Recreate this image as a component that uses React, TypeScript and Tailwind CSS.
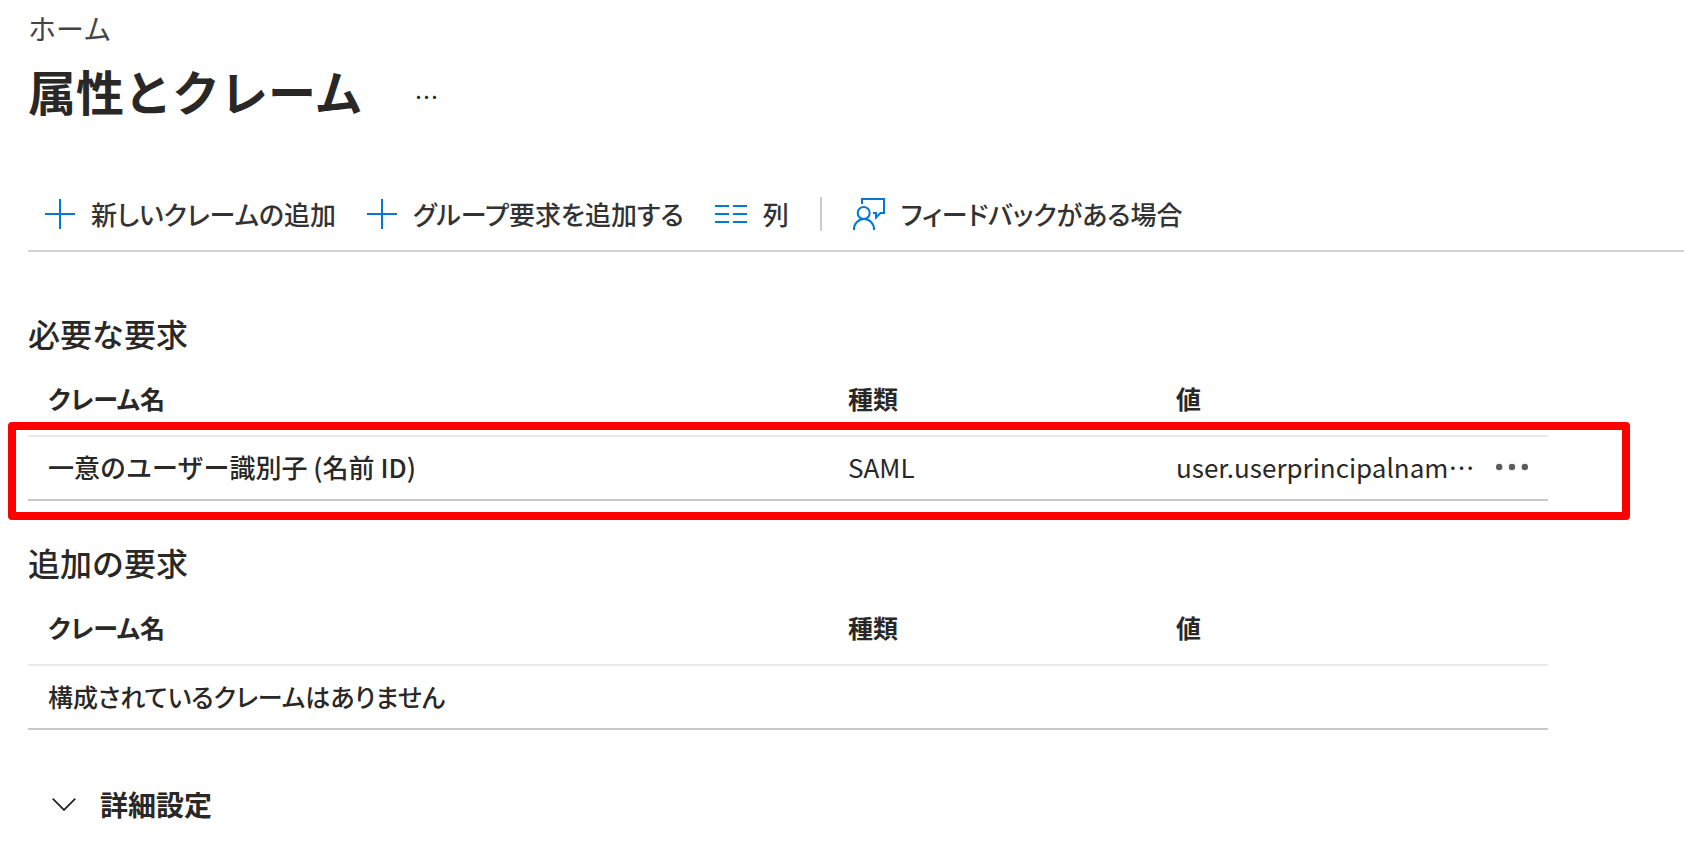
import type { ReactNode } from "react";

type Claim = {
  name: string;
  type: string;
  value: string;
};

const requiredClaims: Claim[] = [
  {
    name: "一意のユーザー識別子 (名前 ID)",
    type: "SAML",
    value: "user.userprincipalnam…"
  }
];

function PlusIcon() {
  return (
    <svg className="size-[30px]" viewBox="0 0 30 30" fill="none" stroke="#0078d4" strokeWidth="2" aria-hidden="true">
      <path d="M15 0v30M0 15h30" />
    </svg>
  );
}

function ColumnsIcon() {
  return (
    <svg className="size-8" viewBox="0 0 32 32" fill="none" stroke="#0078d4" strokeWidth="2" aria-hidden="true">
      <path d="M0 8h14M18 8h14M0 16h14M18 16h14M0 24h14M18 24h14" />
    </svg>
  );
}

function FeedbackIcon() {
  return (
    <svg className="size-8" viewBox="0 0 32 32" fill="none" stroke="#0078d4" strokeWidth="2" aria-hidden="true">
      <path d="M9 6V1h22v14h-3.5L23 19.5V15h-3" />
      <circle cx="10.7" cy="15" r="6" />
      <path d="M1 32v-1a9.9 9.9 0 0 1 20 0v1" />
    </svg>
  );
}

function ToolbarButton({ icon, children }: { icon: ReactNode; children: ReactNode }) {
  return (
    <button type="button" className="flex items-center gap-4 whitespace-nowrap">
      {icon}
      <span>{children}</span>
    </button>
  );
}

function ClaimTable({ label, claims }: { label: string; claims: Claim[] }) {
  return (
    <table aria-label={label} className="w-full table-fixed border-collapse text-left text-[26px] leading-9">
      <colgroup>
        <col />
        <col className="w-[328px]" />
        <col className="w-[320px]" />
        <col className="w-[72px]" />
      </colgroup>
      <thead>
        <tr className="h-[70px] border-b-2 border-[#e9e9e9] text-[25px] [font-feature-settings:'palt']">
          <th className="pb-1.5 pl-5 font-bold">クレーム名</th>
          <th className="pb-1.5 pl-5 font-bold">種類</th>
          <th className="pb-1.5 pl-5 font-bold">値</th>
          <td />
        </tr>
      </thead>
      <tbody>
        {claims.map((claim) => (
          <tr className="h-16 border-b-2 border-[#c8c8c8]" key={claim.name}>
            <td className="pb-0.5 pl-5 font-medium">{claim.name}</td>
            <td className="pb-0.5 pl-5">{claim.type}</td>
            <td className="pb-0.5 pl-5 whitespace-nowrap">{claim.value}</td>
            <td className="pb-0.5 pl-5">
              <button type="button" aria-label="その他" className="flex">
                <svg className="h-2 w-8" viewBox="0 0 32 8" fill="#5c5c5c" aria-hidden="true">
                  <circle cx="3.2" cy="4" r="3.2" />
                  <circle cx="16" cy="4" r="3.2" />
                  <circle cx="28.8" cy="4" r="3.2" />
                </svg>
              </button>
            </td>
          </tr>
        ))}
        {claims.length === 0 && (
          <tr className="h-16 border-b-2 border-[#c8c8c8] text-[25px] [font-feature-settings:'palt']">
            <td className="pb-0.5 pl-5 font-medium" colSpan={4}>
              構成されているクレームはありません
            </td>
          </tr>
        )}
      </tbody>
    </table>
  );
}

export default function App() {
  return (
    <div lang="ja" className="min-h-screen bg-white pl-7 font-['Noto_Sans_CJK_JP',sans-serif] text-[#292827]">
      <header className="pt-[10px]">
        <nav aria-label="階層" className="flex">
          <a href="#" className="text-[28px] leading-9 text-[#444444]">
            ホーム
          </a>
        </nav>
        <div className="mt-[10px] flex items-center gap-[52px]">
          <h1 className="text-5xl leading-[68px] font-bold">属性とクレーム</h1>
          <button type="button" aria-label="その他" className="pt-3 text-2xl">
            …
          </button>
        </div>
      </header>

      <div
        role="toolbar"
        aria-label="コマンド"
        className="mt-[53px] flex h-[75px] items-center gap-[31px] border-b-2 border-[#d2d2d2] pl-[17px] text-[26px] leading-9 font-medium text-[#333333] [font-feature-settings:'palt']"
      >
        <ToolbarButton icon={<PlusIcon />}>新しいクレームの追加</ToolbarButton>
        <ToolbarButton icon={<PlusIcon />}>グループ要求を追加する</ToolbarButton>
        <ToolbarButton icon={<ColumnsIcon />}>列</ToolbarButton>
        <div className="h-[34px] w-0.5 bg-[#cccccc]" />
        <ToolbarButton icon={<FeedbackIcon />}>フィードバックがある場合</ToolbarButton>
      </div>

      <main className="pr-[136px]">
        <section className="pt-14">
          <h2 className="text-[32px] leading-[50px] font-medium">必要な要求</h2>
          <div className="relative mt-2">
            <ClaimTable label="必要な要求" claims={requiredClaims} />
            <div className="pointer-events-none absolute -right-[82px] -bottom-[19px] -left-5 h-[98px] rounded-[4px] border-8 border-[#ff0000]" />
          </div>
        </section>

        <section className="pt-9">
          <h2 className="text-[32px] leading-[50px] font-medium">追加の要求</h2>
          <div className="mt-2">
            <ClaimTable label="追加の要求" claims={[]} />
          </div>
        </section>

        <button type="button" aria-expanded="false" className="mt-[54px] ml-6 flex items-center gap-6 text-[28px] leading-10 font-bold">
          <svg className="h-[13px] w-6" viewBox="0 0 24 13" fill="none" stroke="currentColor" strokeWidth="1.8" aria-hidden="true">
            <path d="M0.7 0.7L12 12L23.3 0.7" />
          </svg>
          詳細設定
        </button>
      </main>
    </div>
  );
}
